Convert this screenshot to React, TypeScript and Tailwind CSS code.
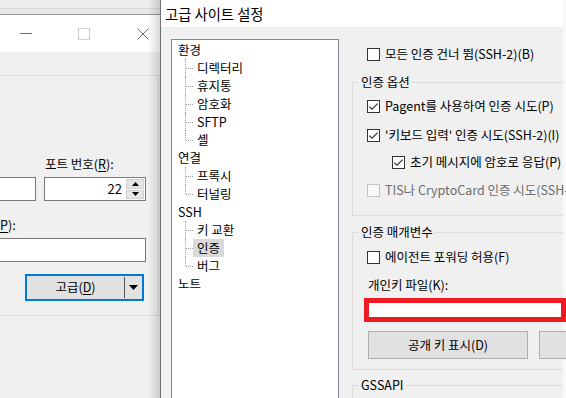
import type { ReactNode } from "react";

/* ---------- Data ---------- */
const tree: { label: string; children: string[] }[] = [
  { label: "환경", children: ["디렉터리", "휴지통", "암호화", "SFTP", "셸"] },
  { label: "연결", children: ["프록시", "터널링"] },
  { label: "SSH", children: ["키 교환", "인증", "버그"] },
  { label: "노트", children: [] },
];

/* ---------- Small pieces ---------- */
function Box({ checked, disabled }: { checked?: boolean; disabled?: boolean }) {
  return (
    <span
      className={`flex h-[13px] w-[13px] shrink-0 items-center justify-center border ${
        disabled ? "border-[#c4c4c4] bg-[#f7f7f7]" : "border-[#333333] bg-white"
      }`}
    >
      {checked && (
        <svg width="11" height="11" viewBox="0 0 11 11">
          <path d="M1.4 5.6 L4 8.2 L9.6 2.6" fill="none" stroke="#333333" strokeWidth="1.2" />
        </svg>
      )}
    </span>
  );
}

function CheckRow({
  children,
  checked,
  disabled,
  className = "",
}: {
  children: ReactNode;
  checked?: boolean;
  disabled?: boolean;
  className?: string;
}) {
  return (
    <div className={`flex h-[16px] items-center gap-[5px] whitespace-nowrap leading-[16px] ${className}`}>
      <Box checked={checked} disabled={disabled} />
      <span className={disabled ? "text-[#6d6d6d]" : "text-black"}>{children}</span>
    </div>
  );
}

function Group({ title, className = "", children }: { title: string; className?: string; children?: ReactNode }) {
  return (
    <div className={`relative ml-[13px] flex shrink-0 flex-col border-t border-l border-[#dcdcdc] ${className}`}>
      <span className="absolute -top-[9px] left-[6px] bg-[#f0f0f0] px-[2px] leading-[16px]">{title}</span>
      {children}
    </div>
  );
}

function TreeItem({ label, last, selected }: { label: string; last: boolean; selected?: boolean }) {
  return (
    <div className="ml-[13px] flex h-[18px] items-center">
      <span className="relative h-full w-[8px] shrink-0">
        <span
          className={`absolute left-0 top-0 border-l border-dotted border-[#a0a0a0] ${last ? "h-[9px]" : "h-full"}`}
        />
        <span className="absolute left-[1px] top-[9px] w-[7px] border-t border-dotted border-[#a0a0a0]" />
      </span>
      <span className={`h-[18px] px-[4px] leading-[18px] ${selected ? "bg-[#d9d9d9]" : ""}`}>{label}</span>
    </div>
  );
}

/* ---------- Windows ---------- */
function LoginWindow() {
  return (
    <div className="absolute left-0 top-0 h-full w-[160px] bg-[#f0f0f0]">
      <div className="h-[15px] border-b border-[#9a9a9a] bg-[#e8e8e8]">
        <div className="h-[9px] border-b border-[#d9d9d9] bg-[#ededed]" />
      </div>
      <div className="flex h-[37px] items-center bg-white">
        <span className="ml-[20px] h-px w-[12px] bg-[#6b6b6b]" />
        <span className="ml-[46px] h-[12px] w-[12px] border border-[#cfcfcf]" />
        <svg className="ml-[47px]" width="12" height="12" viewBox="0 0 12 12">
          <path d="M0.5 0.5 L11.5 11.5 M11.5 0.5 L0.5 11.5" stroke="#707070" strokeWidth="1" />
        </svg>
      </div>
      <div className="pt-[23px]">
        <div className="flex h-[241px] w-[159px] flex-col border-t border-r border-b border-[#dcdcdc]">
          <div className="mt-[80px] h-[16px] pl-[45px] leading-[16px]">
            포트 번호(<span className="underline underline-offset-2">R</span>):
          </div>
          <div className="mt-[5px] flex h-[24px]">
            <div className="w-[36px] border-y border-r border-[#7a7a7a] bg-white" />
            <div className="ml-[8px] flex w-[102px] items-center justify-end border border-[#7a7a7a] bg-white pr-[1px]">
              <span className="mr-[4px] text-[13px]">22</span>
              <div className="flex h-[20px] w-[18px] flex-col gap-px">
                <div className="flex flex-1 items-center justify-center border border-[#d0d0d0] bg-[#e6e6e6]">
                  <svg width="7" height="4" viewBox="0 0 7 4">
                    <path d="M0 4 L3.5 0 L7 4 Z" fill="#000" />
                  </svg>
                </div>
                <div className="flex flex-1 items-center justify-center border border-[#d0d0d0] bg-[#e6e6e6]">
                  <svg width="7" height="4" viewBox="0 0 7 4">
                    <path d="M0 0 L3.5 4 L7 0 Z" fill="#000" />
                  </svg>
                </div>
              </div>
            </div>
          </div>
          <div className="mt-[16px] h-[16px] leading-[16px]">
            <span className="underline underline-offset-2">P</span>):
          </div>
          <div className="mt-[5px] h-[24px] w-[146px] border-y border-r border-[#7a7a7a] bg-white" />
          <div className="ml-[25px] mt-[12px] flex h-[27px] w-[119px] items-center border-2 border-[#0078d7] bg-[#e1e1e1]">
            <span className="flex-1 text-center">
              고급(<span className="underline underline-offset-2">D</span>)
            </span>
            <span className="h-[21px] w-px bg-[#555555]" />
            <svg className="mx-[4px]" width="9" height="5" viewBox="0 0 9 5">
              <path d="M0 0 L9 0 L4.5 5 Z" fill="#000" />
            </svg>
          </div>
        </div>
      </div>
      <div className="absolute inset-y-0 right-0 w-[12px] bg-linear-to-r from-transparent to-black/15" />
    </div>
  );
}

function SiteWindow() {
  return (
    <div className="absolute bottom-0 left-[160px] right-0 top-0 flex flex-col border-l border-r-[3px] border-l-[#707070] border-r-[#f8f8f8] bg-[#f0f0f0]">
      <div className="flex h-[27px] shrink-0 items-center bg-white pl-[4px] text-[14.3px]">고급 사이트 설정</div>
      <div className="flex flex-1 pl-[10px] pt-[12px]">
        <div className="h-[400px] w-[168px] shrink-0 border border-[#828790] bg-white pt-px">
          {tree.map((node) => (
            <div key={node.label}>
              <div className="flex h-[18px] items-center pl-[6px] leading-[18px]">{node.label}</div>
              {node.children.map((c, i) => (
                <TreeItem key={c} label={c} last={i === node.children.length - 1} selected={c === "인증"} />
              ))}
            </div>
          ))}
        </div>

        <div className="flex min-w-0 flex-1 flex-col">
          <CheckRow className="ml-[28px] mt-[7px]">모든 인증 건너 뜀(SSH-2)(B)</CheckRow>

          <Group title="인증 옵션" className="mt-[20px] h-[134px] border-b">
            <CheckRow checked className="ml-[14px] mt-[15px]">
              Pagent를 사용하여 인증 시도(P)
            </CheckRow>
            <CheckRow checked className="ml-[14px] mt-[13px]">
              '키보드 입력' 인증 시도(SSH-2)(I)
            </CheckRow>
            <CheckRow checked className="ml-[39px] mt-[11px]">
              초기 메시지에 암호로 응답(P)
            </CheckRow>
            <CheckRow disabled className="ml-[14px] mt-[12px]">
              TIS나 CryptoCard 인증 시도(SSH-2)(C)
            </CheckRow>
          </Group>

          <Group title="인증 매개변수" className="mt-[16px] h-[138px] border-b">
            <CheckRow className="ml-[14px] mt-[16px]">에이전트 포워딩 허용(F)</CheckRow>
            <div className="ml-[15px] mt-[12px] h-[16px] leading-[16px]">개인키 파일(K):</div>
            <div className="ml-[11px] mt-[5px] h-[24px] w-[202px] shrink-0 border-[5px] border-[#ed1c24] bg-white" />
            <div className="ml-[15px] mt-[9px] flex">
              <div className="flex h-[28px] w-[160px] shrink-0 items-center justify-center border border-[#adadad] bg-[#e1e1e1]">
                공개 키 표시(D)
              </div>
              <div className="ml-[11px] h-[28px] w-[100px] shrink-0 border border-[#adadad] bg-[#e1e1e1]" />
            </div>
          </Group>

          <Group title="GSSAPI" className="mt-[15px] h-[40px]" />
        </div>
      </div>
    </div>
  );
}

export default function App() {
  return (
    <div className="relative h-[398px] w-[566px] overflow-hidden bg-[#f0f0f0] font-['Noto_Sans_CJK_KR',sans-serif] text-[12.5px] text-black">
      <LoginWindow />
      <SiteWindow />
    </div>
  );
}
